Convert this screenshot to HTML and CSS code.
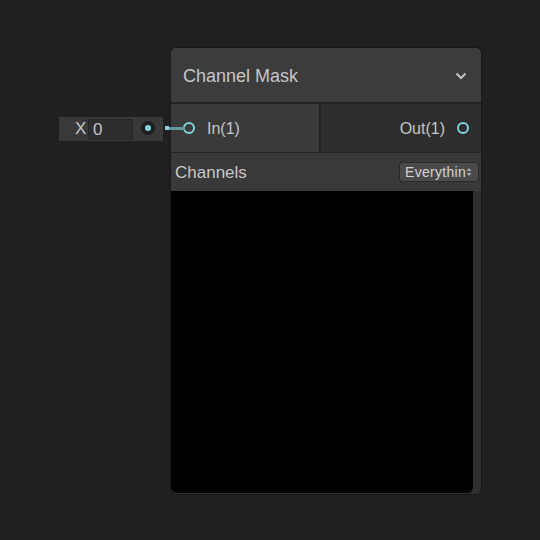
FILE: index.html
```html
<!DOCTYPE html>
<html>
<head>
<meta charset="utf-8">
<link rel="stylesheet" href="styles.css">
</head>
<body>
<div class="canvas">
  <div class="field">
    <span class="field-label">X</span>
    <span class="field-input">0</span>
  </div>
  <div class="src-dot"></div>
  <div class="wire-cap"></div>
  <div class="wire"></div>

  <div class="node">
    <div class="header">
      <span class="title">Channel Mask</span>
      <svg class="chev" width="12" height="8" viewBox="0 0 12 8"><path d="M1.5 1.5 L6 6 L10.5 1.5" fill="none" stroke="#c2c2c2" stroke-width="2"/></svg>
    </div>
    <div class="ports">
      <div class="inputs">
        <span class="port"></span>
        <span class="port-label">In(1)</span>
      </div>
      <div class="outputs">
        <span class="port-label">Out(1)</span>
        <span class="port"></span>
      </div>
    </div>
    <div class="channels">
      <span class="ch-label">Channels</span>
      <div class="dropdown">
        <span class="dd-text">Everything</span>
        <svg class="dd-arrows" width="6" height="10" viewBox="0 0 6 10"><path d="M0.5 4 L3 1 L5.5 4 Z M0.5 6 L3 9 L5.5 6 Z" fill="#a8a8a8"/></svg>
      </div>
    </div>
    <div class="preview-row">
      <div class="preview"></div>
      <div class="strip"></div>
    </div>
  </div>
</div>
</body>
</html>
```

FILE: styles.css
```css
html, body {
  margin: 0;
  padding: 0;
  background: #202020;
  font-family: "Liberation Sans", Arial, sans-serif;
}
.canvas {
  position: relative;
  width: 540px;
  height: 540px;
  overflow: hidden;
}
.field {
  position: absolute;
  left: 59px;
  top: 117px;
  width: 104px;
  height: 24px;
  background: #393939;
  display: flex;
  align-items: center;
}
.field-label {
  color: #c4c4c4;
  font-size: 17px;
  margin-left: 16px;
  width: 13px;
}
.field-input {
  box-sizing: border-box;
  width: 45px;
  height: 21px;
  background: #2d2d2d;
  border: 1px solid #262626;
  color: #c4c4c4;
  font-size: 17px;
  line-height: 19px;
  padding-left: 4px;
}
.src-dot {
  position: absolute;
  left: 141px;
  top: 121px;
  width: 14px;
  height: 14px;
  border-radius: 50%;
  background: #1e1e1e;
}
.src-dot::after {
  content: "";
  position: absolute;
  left: 4px;
  top: 4px;
  width: 6px;
  height: 6px;
  border-radius: 50%;
  background: #7fd4dc;
}
.wire-cap {
  position: absolute;
  left: 165px;
  top: 126px;
  width: 4px;
  height: 4px;
  background: #8fd0d4;
}
.wire {
  position: absolute;
  left: 169px;
  top: 127px;
  width: 16px;
  height: 3px;
  background: #66999b;
  z-index: 2;
}
.node {
  position: absolute;
  left: 170px;
  top: 47px;
  width: 312px;
  height: 448px;
  box-sizing: border-box;
  border: 1px solid #181818;
  border-radius: 6px;
  background: #2c2c2c;
  display: flex;
  flex-direction: column;
  overflow: hidden;
}
.header {
  height: 54px;
  flex: none;
  background: #3c3c3c;
  border-bottom: 2px solid #242424;
  display: flex;
  align-items: center;
  justify-content: space-between;
  padding: 0 14px 0 12px;
}
.title {
  color: #c6c6c6;
  font-size: 18px;
  margin-top: 2px;
}
.chev {
  margin-top: 2px;
}
.ports {
  height: 48px;
  flex: none;
  display: flex;
  border-bottom: 1px solid #262626;
}
.inputs {
  width: 148px;
  background: #3a3a3a;
  border-right: 2px solid #242424;
  display: flex;
  align-items: center;
}
.outputs {
  flex: 1;
  background: #2e2e2e;
  display: flex;
  align-items: center;
  justify-content: flex-end;
  padding-right: 12px;
}
.port {
  box-sizing: border-box;
  width: 12px;
  height: 12px;
  border: 2px solid #7fd4dc;
  border-radius: 50%;
}
.inputs .port {
  margin-left: 12px;
  margin-right: 12px;
}
.outputs .port {
  margin-left: 12px;
}
.port-label {
  color: #c6c6c6;
  font-size: 16px;
  margin-top: 1px;
}
.channels {
  height: 38px;
  flex: none;
  background: #393939;
  display: flex;
  align-items: center;
  justify-content: space-between;
  padding: 0 2px 0 4px;
}
.ch-label {
  color: #c8c8c8;
  font-size: 17px;
  margin-top: 1px;
}
.dropdown {
  box-sizing: border-box;
  width: 80px;
  height: 20px;
  background: #4a4a4a;
  border: 1px solid #2a2a2a;
  border-radius: 3px;
  display: flex;
  align-items: center;
  padding-left: 5px;
  position: relative;
  overflow: hidden;
}
.dd-text {
  color: #d2d2d2;
  font-size: 14px;
  letter-spacing: 0.3px;
  white-space: nowrap;
  width: 61px;
  overflow: hidden;
}
.dd-arrows {
  position: absolute;
  right: 6px;
  top: 4px;
}
.preview-row {
  flex: 1;
  display: flex;
}
.preview {
  width: 302px;
  height: 302px;
  background: #000;
  border-radius: 0 0 6px 6px;
}
.strip {
  flex: 1;
  background: #2e2e2e;
}
```
